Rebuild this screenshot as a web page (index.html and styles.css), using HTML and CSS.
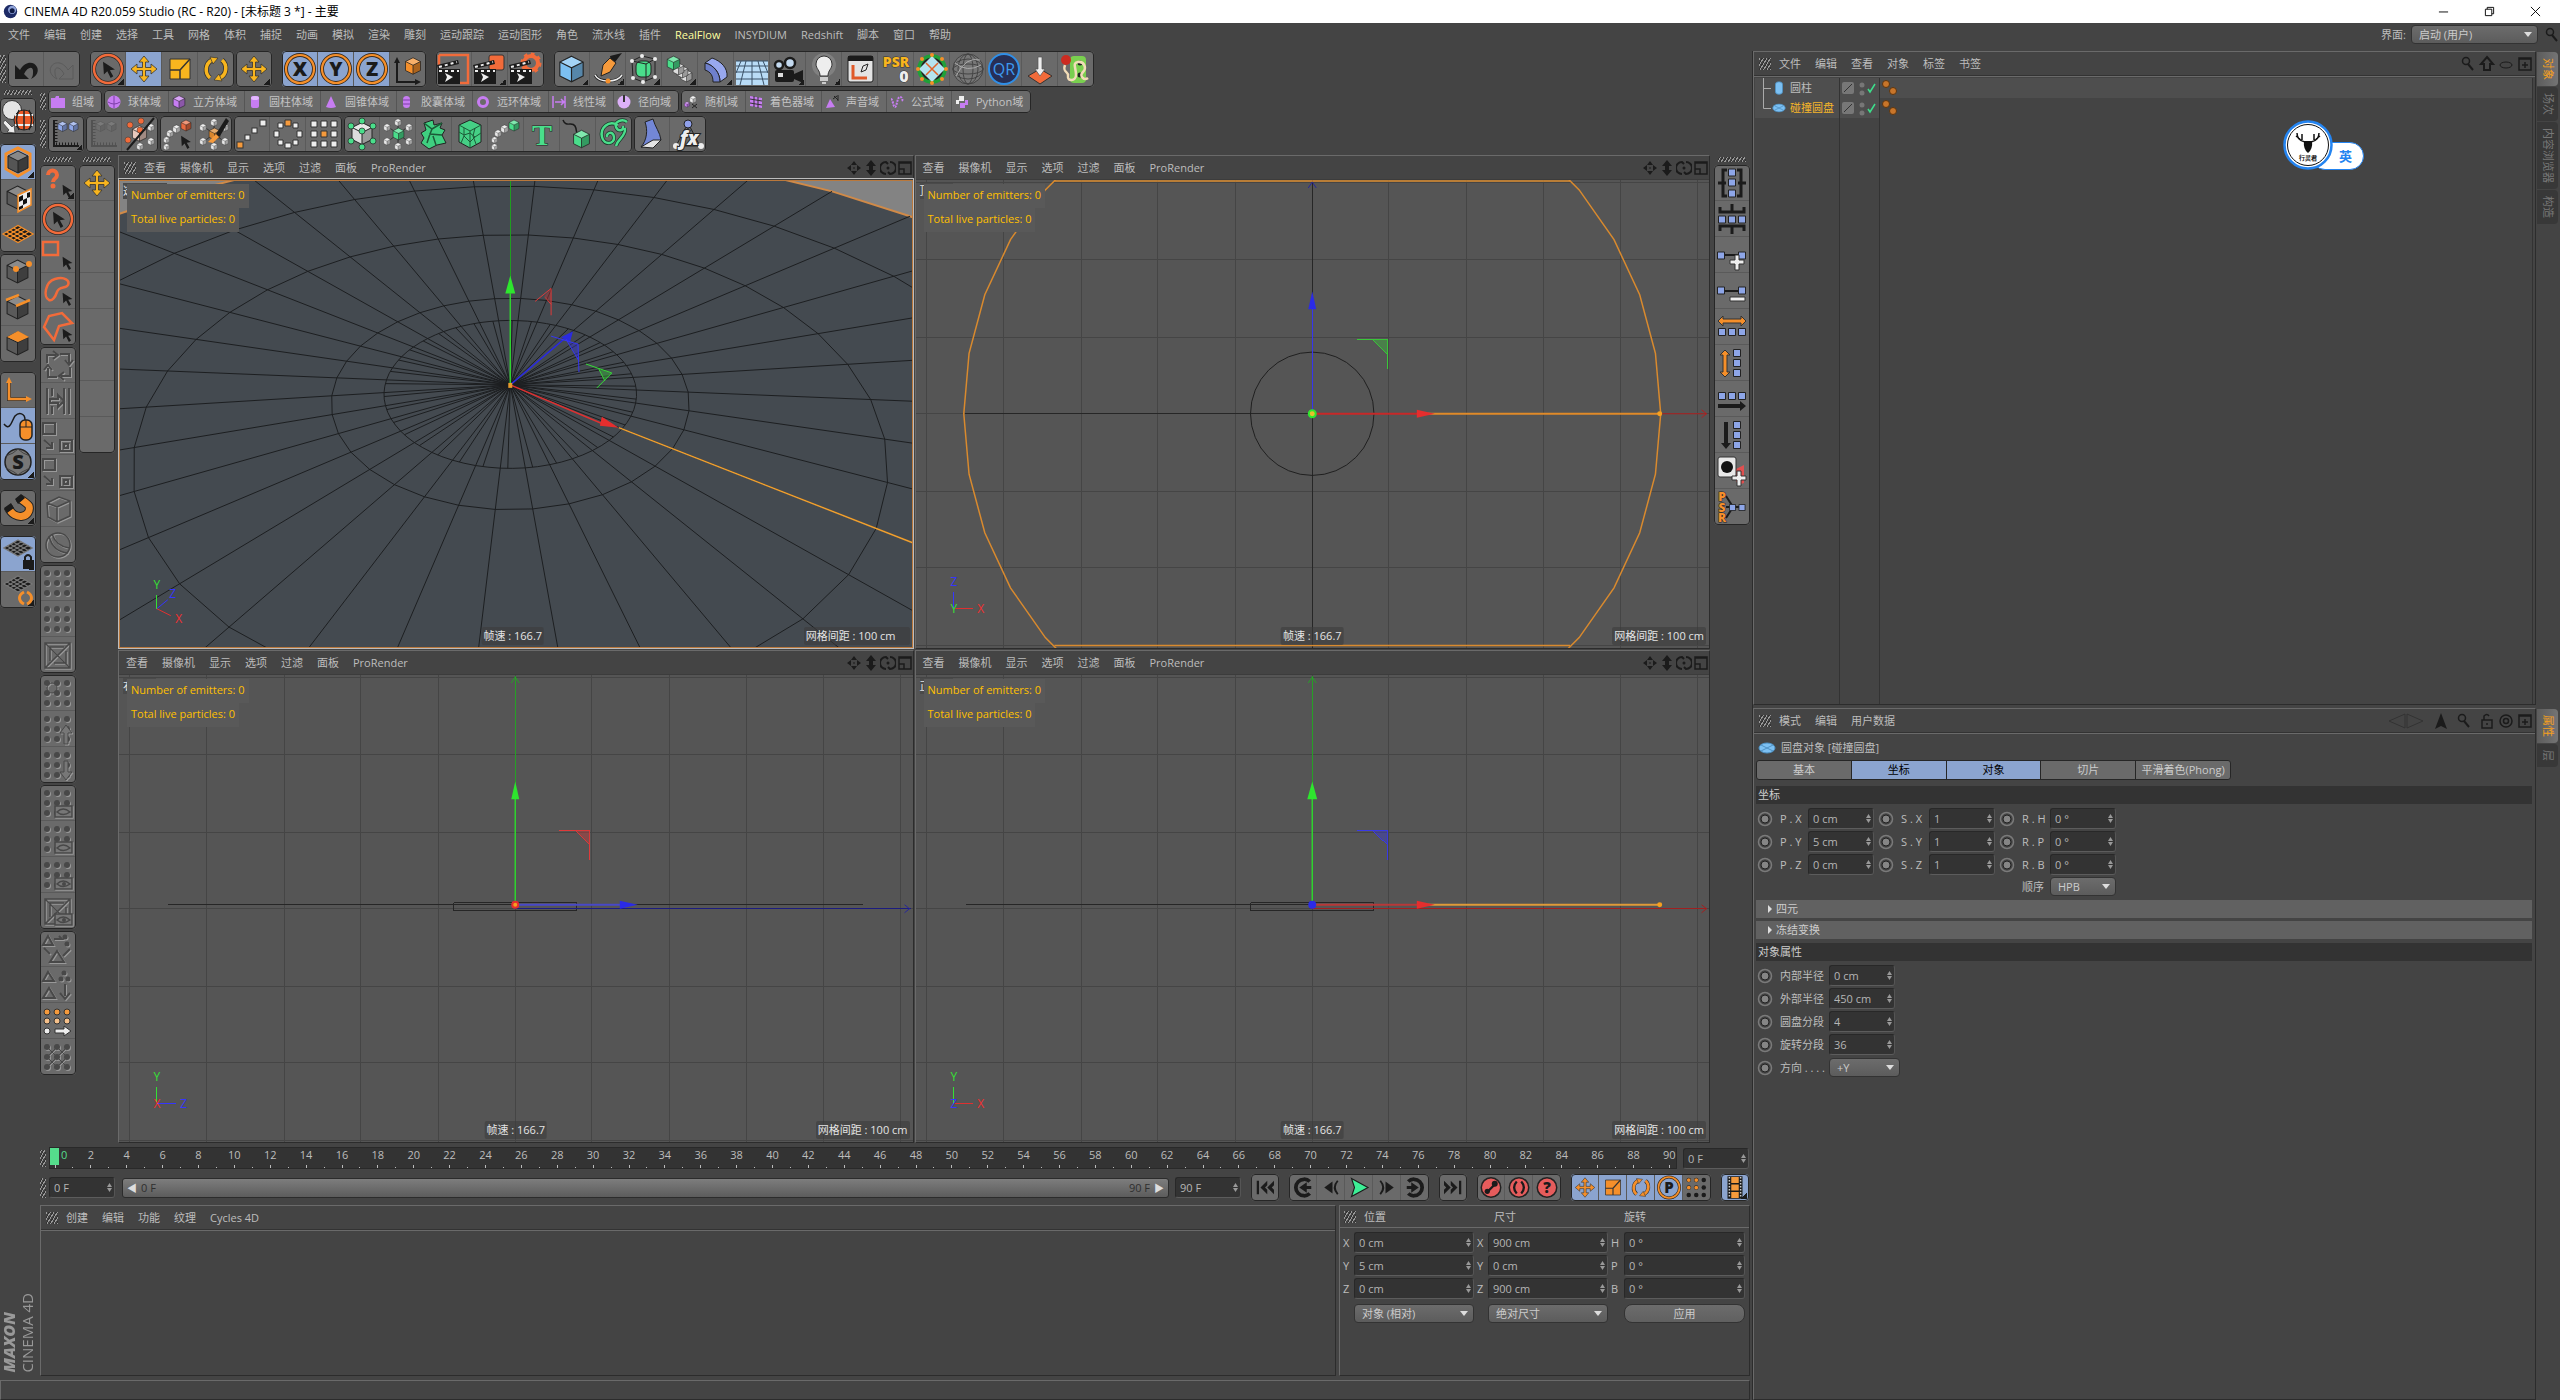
FILE: index.html
```html
<!DOCTYPE html>
<html lang="zh-CN">
<head>
<meta charset="utf-8">
<title>CINEMA 4D R20.059 Studio</title>
<link rel="stylesheet" href="styles.css">
</head>
<body>
<svg class="defs" aria-hidden="true">
<defs>
<symbol id="cube" viewBox="0 0 24 24"><path d="M12 1 22 6v12l-10 5L2 18V6z" fill="currentColor"/><path d="M12 11 22 6v12l-10 5z" fill="#000" opacity=".3"/><path d="M12 11 2 6l10-5 10 5z" fill="#fff" opacity=".3"/><path d="M12 1 22 6v12l-10 5L2 18V6zM2 6l10 5 10-5M12 11v12" fill="none" stroke="#222"/></symbol>
<symbol id="arrow" viewBox="0 0 16 20"><path d="M1 1 15 10 9 11 13 18 10 20 6 12 2 16z" fill="#1b1b1b"/></symbol>
<symbol id="cross" viewBox="0 0 36 36"><path d="M18 5l5 6h-3.500v5.500H25V13l6 5-6 5v-3.500h-5.500V25H23l-5 6-5-6h3.500v-5.500H11V23l-6-5 6-5v3.500h5.500V11H13z" fill="currentColor" stroke="#333" stroke-width=".8"/></symbol>
<symbol id="undo" viewBox="0 0 36 36"><path d="M7 14v14h14l-5-5c4-8 10-8 9-1 0 3-1 4-2 6 6-3 8-8 6-12-3-6-12-6-17 3z" fill="currentColor"/></symbol>
<symbol id="redo" viewBox="0 0 36 36"><path d="M29 14v14H15l5-5c-4-8-10-8-9-1 0 3 1 4 2 6-6-3-8-8-6-12 3-6 12-6 17 3z" fill="none" stroke="#5b5b5b"/></symbol>
<symbol id="sel" viewBox="0 0 36 36"><circle cx="18" cy="18" r="14" fill="none" stroke="#2b2b2b" stroke-width="4"/><circle cx="18" cy="18" r="14" fill="none" stroke="#f26b3a" stroke-width="2.500"/><use href="#arrow" x="12" y="10" width="14" height="17"/></symbol>
<symbol id="scale" viewBox="0 0 36 36"><path d="M8 8h20v20H8z" fill="currentColor" stroke="#333"/><path d="M8 19h10v9M18 19l10-11" fill="none" stroke="#333" stroke-width="1.500"/></symbol>
<symbol id="rot" viewBox="0 0 36 36"><g fill="none" stroke="#333" stroke-width="5"><path d="M12 27a11 11 0 0 1 2-18M24 9a11 11 0 0 1-2 18"/></g><g fill="none" stroke="currentColor" stroke-width="3.500"><path d="M12 27a11 11 0 0 1 2-18M24 9a11 11 0 0 1-2 18"/></g><path d="M12 6l8 1-5 6zM24 30l-8-1 5-6z" fill="currentColor" stroke="#333" stroke-width=".7"/></symbol>
<symbol id="ring" viewBox="0 0 36 36"><circle cx="18" cy="18" r="14" fill="none" stroke="#3a2b1b" stroke-width="4"/><circle cx="18" cy="18" r="14" fill="none" stroke="#f58f2a" stroke-width="2.200"/></symbol>
<symbol id="coord" viewBox="0 0 36 36"><path d="M7 10v21h20" fill="none" stroke="#1b1b1b" stroke-width="2"/><path d="M7 6l3 6H4zM31 31l-6-3v6z" fill="#1b1b1b"/><use href="#cube" x="14" y="4" width="18" height="22" color="#f58f2a"/></symbol>
<symbol id="clap" viewBox="0 0 36 36"><path d="M2 18h22v15H2z" fill="#1b1b1b"/><path d="M1 14 22 9l1 4-21 5z" fill="#1b1b1b"/><path d="M3 16l18-5M3 20h20" stroke="#eee" stroke-width="2" stroke-dasharray="3 3"/><path d="M9 22l8 4-8 5 2-5z" fill="#eee"/></symbol>
<symbol id="rend1" viewBox="0 0 36 36"><path d="M3 4h29v28H24" fill="none" stroke="#f26b3a" stroke-width="2.500"/><path d="M3 14V4" stroke="#f26b3a" stroke-width="2.500"/><use href="#clap"/></symbol>
<symbol id="rend2" viewBox="0 0 36 36"><rect x="17" y="4" width="15" height="15" rx="2" fill="#f26b3a" stroke="#333"/><use href="#clap"/></symbol>
<symbol id="rend3" viewBox="0 0 36 36"><circle cx="23" cy="12" r="7" fill="none" stroke="#f26b3a" stroke-width="4"/><circle cx="23" cy="12" r="9" fill="none" stroke="#f26b3a" stroke-width="3" stroke-dasharray="3.500 3.500"/><use href="#clap"/></symbol>
<symbol id="pcube" viewBox="0 0 36 36"><use href="#cube" x="3" y="4" width="29" height="28" color="#7cc0f2"/></symbol>
<symbol id="pen" viewBox="0 0 36 36"><path d="M20 5 32 2 22 15z" fill="#1b1b1b"/><path d="M20 7l6 5-6 9-9 4 2-11z" fill="#f59a3c" stroke="#222"/><path d="M5 24c4 8 22 8 27 0" fill="none" stroke="#222" stroke-width="3"/><path d="M5 24c4 8 22 8 27 0" fill="none" stroke="#eee" stroke-width="1.500"/><circle cx="18" cy="30" r="2.500" fill="#f58f2a"/></symbol>
<symbol id="subd" viewBox="0 0 36 36"><rect x="10" y="10" width="15" height="16" rx="5" fill="#4ade8b" stroke="#222"/><path d="M6 10l10-5 13 3v18l-12 5-10-4zM6 10l14 3 9-5M20 13v17" fill="none" stroke="#222"/><g fill="#eee"><circle cx="6" cy="10" r="2"/><circle cx="29" cy="8" r="2"/><circle cx="16" cy="5" r="2"/><circle cx="29" cy="26" r="2"/><circle cx="7" cy="27" r="2"/><circle cx="17" cy="31" r="2"/></g></symbol>
<symbol id="arr" viewBox="0 0 36 36"><g color="#ddd"><use href="#cube" x="18" y="18" width="13" height="14"/><use href="#cube" x="14" y="14" width="13" height="14"/><use href="#cube" x="10" y="11" width="13" height="14"/></g><use href="#cube" x="4" y="4" width="15" height="16" color="#4ade8b"/></symbol>
<symbol id="bend" viewBox="0 0 36 36"><path d="M7 12l7-5c9 3 16 10 15 19l-7 5C22 22 16 14 7 12z" fill="#98a8ee" stroke="#222"/><path d="M7 12v7c6 2 8 6 8 12h7C22 22 16 14 7 12z" fill="#6f80cc" stroke="#222"/></symbol>
<symbol id="floor" viewBox="0 0 36 36"><path d="M2 10h32v24H2z" fill="#b9dcf7"/><path d="M2 10h32M2 15h32M2 21h32M2 28h32M18 10v24M12 10 6 34M24 10l6 24M7 10l-5 12M29 10l5 12" stroke="#3a5066" fill="none"/></symbol>
<symbol id="cam" viewBox="0 0 36 36"><rect x="5" y="19" width="19" height="12" rx="2" fill="#1b1b1b"/><path d="M24 23l9-4v13l-9-4z" fill="#1b1b1b"/><circle cx="9" cy="14" r="4" fill="#c4daf0" stroke="#1b1b1b" stroke-width="2.500"/><circle cx="20" cy="12" r="5" fill="#c4daf0" stroke="#1b1b1b" stroke-width="2.500"/><rect x="8" y="22" width="5" height="4" fill="#ddd"/></symbol>
<symbol id="bulb" viewBox="0 0 36 36"><circle cx="18" cy="14" r="12" fill="#fff" opacity=".15"/><path d="M18 5a8 8 0 0 1 8 8c0 5-4 6-4 12h-8c0-6-4-7-4-12a8 8 0 0 1 8-8z" fill="#eee" stroke="#333"/><path d="M14 27h8M14 29h8M16 32h4" stroke="#ccc" stroke-width="2"/></symbol>
<symbol id="plan" viewBox="0 0 36 36"><rect x="6" y="5" width="25" height="26" rx="2" fill="#e4e4e4" stroke="#222"/><path d="M6 5h25v5H6z" fill="#1b1b1b"/><path d="M11 14v13h14" stroke="#e05a2a" stroke-width="3" fill="none"/><path d="M19 21l2-6 5-2-2 6z" fill="none" stroke="#222"/></symbol>
<symbol id="disk" viewBox="0 0 36 36"><circle cx="18" cy="18" r="13" fill="#222" stroke="#1fa038" stroke-width="3.500"/><path d="M18 5 31 18 18 31 5 18z" fill="#b5e4f0"/><path d="M12 12l12 12M24 12 12 24" stroke="#e0642a" stroke-width="1.500"/><g fill="#f58f2a"><circle cx="18" cy="4" r="2"/><circle cx="32" cy="18" r="2"/><circle cx="18" cy="32" r="2"/><circle cx="4" cy="18" r="2"/><circle cx="8" cy="8" r="2"/><circle cx="28" cy="8" r="2"/><circle cx="8" cy="28" r="2"/><circle cx="28" cy="28" r="2"/></g></symbol>
<symbol id="wire" viewBox="0 0 36 36"><circle cx="18" cy="18" r="15" fill="#777" stroke="#444"/><g fill="none" stroke="#444"><ellipse cx="18" cy="18" rx="5" ry="15"/><ellipse cx="18" cy="18" rx="10" ry="15"/><ellipse cx="18" cy="18" rx="15" ry="5"/><ellipse cx="18" cy="18" rx="15" ry="10"/></g><path d="M5 12q12 10 26 2M6 25q10-20 24-16" fill="none" stroke="#aaa"/></symbol>
<symbol id="drop" viewBox="0 0 36 36"><path d="M18 18 30 25 18 33 6 25z" fill="#f26b3a" stroke="#333"/><path d="M16 6h4v12h3l-5 7-5-7h3z" fill="#eee" stroke="#555" stroke-width=".7"/></symbol>
<symbol id="jelly" viewBox="0 0 36 36"><rect x="12" y="5" width="16" height="27" rx="4" fill="#79cf4f"/><circle cx="22" cy="12" r="2.500" fill="#222"/><circle cx="22" cy="24" r="2.500" fill="#222"/><path d="M7 14c-3 8 4 6 3 11-1 6 8 5 8-1 0-8-4-12 2-13s9 6 5 10 1 9 5 6" fill="none" stroke="#f2ddb8" stroke-width="2.500"/><circle cx="8" cy="9" r="5" fill="#cc2b20"/></symbol>
<symbol id="ax2" viewBox="0 0 36 36"><path d="M6 4v26h25" fill="none" stroke="#1b1b1b" stroke-width="2"/><path d="M8 4v24M8 28h24" stroke="#1b1b1b" stroke-width="3" stroke-dasharray="1 2"/><use href="#cube" x="9" y="4" width="11" height="13"/><use href="#cube" x="20" y="4" width="11" height="13"/></symbol>
<symbol id="mol" viewBox="0 0 36 36"><path d="M18 4v28M7 10l22 16M29 10 7 26" stroke="#333" stroke-width="1"/><g color="#e8e8e8"><use href="#cube" x="14" y="2" width="8" height="9"/><use href="#cube" x="3" y="7" width="8" height="9"/><use href="#cube" x="25" y="7" width="8" height="9"/><use href="#cube" x="3" y="21" width="8" height="9"/><use href="#cube" x="25" y="21" width="8" height="9"/><use href="#cube" x="14" y="26" width="8" height="9"/></g><use href="#cube" x="12" y="11" width="13" height="14"/></symbol>
<symbol id="molx" viewBox="0 0 36 36"><g color="#e8e8e8"><use href="#cube" x="25" y="7" width="8" height="9"/><use href="#cube" x="25" y="21" width="8" height="9"/><use href="#cube" x="14" y="26" width="8" height="9"/></g><use href="#cube" x="9" y="9" width="17" height="17" color="#e8c8bc"/><g fill="#f26b3a" stroke="#333" stroke-width=".5"><circle cx="8" cy="9" r="3"/><circle cx="19" cy="5" r="3"/><circle cx="6" cy="24" r="3"/><circle cx="18" cy="14" r="3"/></g><path d="M32 2 5 34" stroke="#1b1b1b" stroke-width="2"/></symbol>
<symbol id="curve" viewBox="0 0 36 36"><g color="#e8e8e8"><use href="#cube" x="3" y="27" width="7" height="8"/><use href="#cube" x="3" y="20" width="7" height="8"/><use href="#cube" x="6" y="13" width="8" height="9"/><use href="#cube" x="12" y="8" width="9" height="10"/></g><use href="#cube" x="20" y="3" width="12" height="13"/></symbol>
<symbol id="brush" viewBox="0 0 36 36"><use href="#mol" color="#d9862e"/><path d="M20 18 30 2l3 3-9 15-7 4z" fill="#1b1b1b"/><path d="M12 26l8-8 3 3-6 6z" fill="#f59a3c"/></symbol>
<symbol id="diag" viewBox="0 0 36 36"><g fill="#eee" stroke="#333"><rect x="11" y="19" width="5" height="5"/><rect x="18" y="12" width="5" height="5"/><rect x="26" y="4" width="6" height="6"/></g><rect x="3" y="26" width="6" height="6" fill="#f59a3c" stroke="#333"/></symbol>
<symbol id="circ" viewBox="0 0 36 36"><g fill="#eee" stroke="#333"><path d="M23 7h5v5h-5zM27 15h5v6h-5zM23 24h5v5h-5zM15 27h6v5h-6zM8 24h5v5H8zM4 15h5v6H4zM8 7h5v5H8z"/><path d="M15 4h6v6h-6z" fill="#f59a3c"/></g></symbol>
<symbol id="grid9" viewBox="0 0 36 36"><g fill="#eee" stroke="#333"><path d="M5 5h6v6H5zM15 5h6v6h-6zM25 5h6v6h-6zM5 15h6v6H5zM25 15h6v6h-6zM5 25h6v6H5zM15 25h6v6h-6zM25 25h6v6h-6z"/><path d="M15 15h6v6h-6z" fill="#f59a3c"/></g></symbol>
<symbol id="gdots" viewBox="0 0 36 36"><use href="#cube" x="6" y="5" width="24" height="25" color="#ddd"/><g fill="#4ade8b" stroke="#222" stroke-width=".7"><circle cx="18" cy="5" r="3"/><circle cx="7" cy="10" r="3"/><circle cx="29" cy="10" r="3"/><circle cx="18" cy="15" r="3"/><circle cx="7" cy="25" r="3"/><circle cx="29" cy="25" r="3"/><circle cx="18" cy="31" r="3"/></g></symbol>
<symbol id="frac" viewBox="0 0 36 36"><path d="M8 7l9-3 1 5 8-2-2 5 5 2-3 5 4 8-9 2-8 4-8-6 3-5-3-5 5-3z" fill="#3fcf80" stroke="#222"/><path d="M8 7l8 6 10-6M16 13l-2 5 12 1M14 18l-3 9M17 20l3 9" stroke="#1c5a37" stroke-width="1.500" fill="none"/></symbol>
<symbol id="voro" viewBox="0 0 36 36"><path d="M18 4 29 9v17l-11 6L7 26V9z" fill="#45cf85" stroke="#222"/><path d="M7 9l11 6 11-6M18 15v17M7 16l5 3 6-2 5 4 6-4M12 12v8l-3 7M23 12l-2 8 3 8M12 20l6 6 5-5" fill="none" stroke="#1c5a37"/></symbol>
<symbol id="line" viewBox="0 0 36 36"><path d="M3 4c3 8 9 1 12 6s-1 10 7 8" fill="none" stroke="#1b1b1b" stroke-width="1.500"/><use href="#cube" x="12" y="13" width="19" height="20" color="#4ade8b"/></symbol>
<symbol id="swirl" viewBox="0 0 36 36"><g id="sw" fill="none" stroke="#1b3b2b" stroke-width="4"><path d="M31 6C26 2 18 6 20 11s8 4 7-1M22 9C12 4 4 12 6 21s13 7 12 0-8-4-7 0M29 12c1 9-7 10-9 18"/></g><path d="M31 6C26 2 18 6 20 11s8 4 7-1M22 9C12 4 4 12 6 21s13 7 12 0-8-4-7 0M29 12c1 9-7 10-9 18" fill="none" stroke="#4ade8b" stroke-width="2.500"/></symbol>
<symbol id="twist" viewBox="0 0 36 36"><path d="M11 6l8-3c2 8 7 13 8 21l-8 5-12 2c6-7 7-17 4-25z" fill="#7387d6" stroke="#222"/><path d="M27 24l-8 8-12-1 12-7z" fill="#e4e4e4" stroke="#222"/></symbol>
<symbol id="fx" viewBox="0 0 36 36"><path d="M18 9v8M17 9 6 30h24L19 9" fill="none" stroke="#222"/><circle cx="18" cy="8" r="4" fill="#8fa0ea" stroke="#222"/><circle cx="6" cy="30" r="3" fill="#eee"/><circle cx="31" cy="30" r="3" fill="#eee"/></symbol>
<symbol id="globe" viewBox="0 0 36 36"><circle cx="12" cy="12" r="9.500" fill="#e4e4e4" stroke="#333"/><circle cx="24" cy="22" r="10" fill="#eb5a28" stroke="#222"/><path d="M15 17h18M15 27h18" stroke="#eee" stroke-width="2"/><path d="M19 12q-5 10 0 20M24 12v20M29 12q5 10 0 20" fill="none" stroke="#222" stroke-width="1.500"/><path d="M5 22l7 7 2-2 1 8-8-1 2-2-6-7z" fill="#eee" stroke="#333" stroke-width=".7"/></symbol>
<symbol id="gcube" viewBox="0 0 36 36"><use href="#cube" x="5" y="4" width="25" height="27" color="#5a5a5a"/></symbol>
<symbol id="mcube" viewBox="0 0 36 36"><path d="M18 4 30 10v15l-12 7-12-7V10z" fill="none" stroke="#f58f2a" stroke-width="3"/><use href="#cube" x="6" y="5" width="24" height="26" color="#555"/></symbol>
<symbol id="tcube" viewBox="0 0 36 36"><use href="#gcube"/><path d="M18 15 31 9v16l-13 7z" fill="#eee" stroke="#f58f2a" stroke-width="1.500"/><path d="M19 17l4-2v5l-4 2zM27 13l3-1v5l-3 1zM23 20l4-2v5l-4 2zM19 27l4-2v3l-4 2z" fill="#111"/></symbol>
<symbol id="mesh" viewBox="0 0 36 24"><path d="M2 12 18 3l16 9-16 9z" fill="#1b1b1b"/><path d="M6 14 22 5M10 16 26 7M14 18 30 9M6 10l16 9M10 8l16 9M14 6l16 9M2 12 18 3l16 9-16 9z" fill="none" stroke="currentColor" stroke-width="1.300"/></symbol>
<symbol id="omesh" viewBox="0 0 36 36"><use href="#mesh" x="1" y="5" width="34" height="26" color="#f58f2a"/></symbol>
<symbol id="vcube" viewBox="0 0 36 36"><use href="#gcube"/><circle cx="16" cy="15" r="3" fill="#f58f2a"/><circle cx="29" cy="10" r="3" fill="#f58f2a"/></symbol>
<symbol id="ecube" viewBox="0 0 36 36"><use href="#gcube"/><path d="M6 10 19 5M16 16l14-6" stroke="#f58f2a" stroke-width="2.500"/></symbol>
<symbol id="fcube" viewBox="0 0 36 36"><use href="#gcube"/><path d="M7 11 18 5l11 6-11 5z" fill="#f58f2a"/></symbol>
<symbol id="axes" viewBox="0 0 36 36"><path d="M9 9v18h18" fill="none" stroke="#333" stroke-width="4"/><path d="M9 9v18h18" fill="none" stroke="#f58f2a" stroke-width="2.500"/><path d="M9 5l3 6H6zM32 27l-6-3v6z" fill="#f58f2a"/></symbol>
<symbol id="mouse" viewBox="0 0 36 36"><path d="M4 16c6 8 8-4 11-8 4-4 10-3 10 4" fill="none" stroke="#1b1b1b" stroke-width="1.500"/><rect x="20" y="12" width="12" height="20" rx="5" fill="#f58f2a" stroke="#222" stroke-width="1.500"/><path d="M20 19h12M26 12v7" stroke="#222"/></symbol>
<symbol id="snap" viewBox="0 0 36 36"><circle cx="18" cy="18" r="13" fill="#777" stroke="#222" stroke-width="1.500"/><path d="M6 12l7-3 5-4 5 4 7 3M6 24l8 4 4 3 4-3 8-4" fill="none" stroke="#444"/></symbol>
<symbol id="magnet" viewBox="0 0 36 36"><path d="M8 17c7 15 24 10 21-1-2-3-6-5-10-8" fill="none" stroke="#222" stroke-width="9"/><path d="M8 17c7 15 24 10 21-1-2-3-6-5-10-8" fill="none" stroke="#f58f2a" stroke-width="7"/><path d="M4 18l7-5 3 5-7 5zM15 9l6-5 4 4-7 6z" fill="#1b1b1b"/></symbol>
<symbol id="lock" viewBox="0 0 36 36"><use href="#mesh" x="2" y="1" width="32" height="22" color="#777"/><rect x="23" y="24" width="11" height="9" fill="#1b1b1b"/><path d="M25 24v-3q3-4 6 0v3" fill="none" stroke="#1b1b1b" stroke-width="2"/></symbol>
<symbol id="mbr" viewBox="0 0 36 36"><use href="#mesh" x="2" y="1" width="32" height="22" color="#777"/><path d="M24 20c-6 3-6 9 0 12M27 20c6 3 6 9 0 12" fill="none" stroke="#f58f2a" stroke-width="3"/></symbol>
<symbol id="qm" viewBox="0 0 36 36"><path d="M8 10c0-6 9-6 9 0 0 4-4 3-4 7" fill="none" stroke="#f26b3a" stroke-width="4"/><circle cx="13" cy="21" r="2.500" fill="#f26b3a"/><use href="#arrow" x="21" y="19" width="13" height="14"/></symbol>
<symbol id="srect" viewBox="0 0 36 36"><path d="M3 5h15v13H3z" fill="none" stroke="#f26b3a" stroke-width="2.500"/><use href="#arrow" x="21" y="19" width="13" height="14"/></symbol>
<symbol id="lasso" viewBox="0 0 36 36"><path d="M9 27C3 24 5 9 15 6s15 2 13 6-9 1-11 7-5 9-8 8z" fill="none" stroke="#f26b3a" stroke-width="2.500"/><use href="#arrow" x="21" y="19" width="13" height="14"/></symbol>
<symbol id="spoly" viewBox="0 0 36 36"><path d="M14 31 4 18 9 7l13-3 10 10-13 3z" fill="none" stroke="#f26b3a" stroke-width="2.500"/><use href="#arrow" x="21" y="19" width="13" height="14"/></symbol>
<symbol id="d1" viewBox="0 0 36 36"><path d="M7 16V8h9M13 4l5 4-5 4M20 7h9v9M25 13l4 5 4-5M30 20v9h-9M24 25l-5 4 5 4M17 30H8v-9M4 23l4-5 4 5" fill="none" stroke="currentColor" stroke-width="2"/></symbol>
<symbol id="d2" viewBox="0 0 36 36"><path d="M7 5v26M12 5v8M12 23v8M24 5v26M29 5v26M10 16h8v-4l6 6-6 6v-4h-8z" fill="none" stroke="currentColor" stroke-width="2"/></symbol>
<symbol id="d3" viewBox="0 0 36 36"><path d="M3 4h12v11H3zM20 21h12v11H20zM24 25h4v4h-4zM4 21l8 7M12 23v6H6" fill="none" stroke="currentColor" stroke-width="2"/></symbol>
<symbol id="d4" viewBox="0 0 36 36"><path d="M7 12l12-6 11 4v15l-13 6-9-5zM7 12l10 4 13-6M17 16v15" fill="none" stroke="currentColor" stroke-width="1.500"/></symbol>
<symbol id="d5" viewBox="0 0 36 36"><circle cx="18" cy="18" r="12" fill="none" stroke="currentColor" stroke-width="1.500"/><path d="M9 9q4 16 19 17M12 7q4 12 17 14" fill="none" stroke="currentColor" stroke-width="1.500"/></symbol>
<symbol id="dots" viewBox="0 0 36 36"><g fill="currentColor"><circle cx="7" cy="8" r="3"/><circle cx="17" cy="8" r="3"/><circle cx="27" cy="8" r="3"/><circle cx="7" cy="18" r="3"/><circle cx="17" cy="18" r="3"/><circle cx="27" cy="18" r="3"/><circle cx="7" cy="28" r="3"/><circle cx="17" cy="28" r="3"/><circle cx="27" cy="28" r="3"/></g></symbol>
<symbol id="d6" viewBox="0 0 36 36"><path d="M5 6h25v25H5zM5 6l25 25M30 6 5 31M10 24V10h14M26 14v12H14" fill="none" stroke="currentColor" stroke-width="1.500"/></symbol>
<symbol id="dup" viewBox="0 0 36 36"><use href="#dots"/><path d="M24 33V22h-4l6-8 6 8h-4v11z" fill="#777" stroke="currentColor"/></symbol>
<symbol id="ddn" viewBox="0 0 36 36"><use href="#dots"/><path d="M24 14h4v11h4l-6 8-6-8h4z" fill="#777" stroke="currentColor"/></symbol>
<symbol id="deye" viewBox="0 0 36 36"><use href="#dots"/><path d="M15 21h17v11H15z" fill="#777" stroke="currentColor" stroke-width="1.500"/><path d="M17 27q6-6 13 0-7 5-13 0z" fill="none" stroke="currentColor" stroke-width="1.500"/></symbol>
<symbol id="deye2" viewBox="0 0 36 36"><use href="#d6"/><path d="M15 21h17v11H15z" fill="#777" stroke="currentColor" stroke-width="1.500"/><path d="M17 27q6-6 13 0-7 5-13 0z" fill="none" stroke="currentColor" stroke-width="1.500"/><circle cx="24" cy="27" r="2" fill="currentColor"/></symbol>
<symbol id="tri" viewBox="0 0 36 36"><path d="M3 14 8 5l5 9zM10 31l7-11 7 11zM14 8h8l-3-3M4 17l6 6M30 18l-7 7" fill="none" stroke="currentColor" stroke-width="2"/><circle cx="27" cy="13" r="2.500" fill="currentColor"/><circle cx="25" cy="6" r="2.500" fill="currentColor"/></symbol>
<symbol id="tri2" viewBox="0 0 36 36"><path d="M3 14 8 5l6 9zM3 31l6-10 6 10zM25 17v12M20 26l5 6 5-6" fill="none" stroke="currentColor" stroke-width="2"/><circle cx="21" cy="12" r="2.500" fill="currentColor"/><circle cx="28" cy="12" r="2.500" fill="currentColor"/><circle cx="24" cy="6" r="2.500" fill="currentColor"/></symbol>
<symbol id="odots" viewBox="0 0 36 36"><g stroke="#333"><g fill="#f59a3c"><circle cx="7" cy="9" r="3"/><circle cx="17" cy="9" r="3"/><circle cx="27" cy="9" r="3"/></g><g fill="#f5c08a"><circle cx="7" cy="18" r="3"/><circle cx="17" cy="18" r="3"/><circle cx="27" cy="18" r="3"/></g><circle cx="7" cy="28" r="3" fill="#eee"/><path d="M15 26h9v-3l7 5-7 5v-3h-9z" fill="#eee"/></g></symbol>
<symbol id="dnet" viewBox="0 0 36 36"><use href="#dots"/><path d="M7 18 17 8l10 10-10 10zM7 8l20 20M27 8 7 28" fill="none" stroke="currentColor"/></symbol>
<symbol id="b" viewBox="0 0 8 8"><path d="M.5.500h7v7h-7z" fill="#8ea6e8" stroke="#222"/></symbol>
<symbol id="r1" viewBox="0 0 36 36"><path d="M13 5H9v26h4M23 5h4v26h-4M4 18h8M24 18h8" fill="none" stroke="#1b1b1b" stroke-width="3"/><use href="#b" x="14" y="3" width="8" height="9"/><use href="#b" x="14" y="13" width="8" height="9"/><use href="#b" x="14" y="24" width="8" height="9"/></symbol>
<symbol id="r2" viewBox="0 0 36 36"><path d="M6 6v5h24V6M18 3v8M6 30v-5h24v5M18 25v8" fill="none" stroke="#1b1b1b" stroke-width="3"/><use href="#b" x="4" y="14" width="8" height="9"/><use href="#b" x="14" y="14" width="8" height="9"/><use href="#b" x="24" y="14" width="8" height="9"/></symbol>
<symbol id="r3" viewBox="0 0 36 36"><path d="M8 18h20" stroke="#1b1b1b" stroke-width="2"/><use href="#b" x="3" y="14" width="8" height="9"/><use href="#b" x="24" y="14" width="8" height="9"/><path d="M21 18h4v5h5v4h-5v6h-4v-6h-5v-4h5z" fill="#eee" stroke="#333"/></symbol>
<symbol id="r4" viewBox="0 0 36 36"><path d="M8 18h20" stroke="#1b1b1b" stroke-width="2"/><use href="#b" x="3" y="13" width="8" height="9"/><use href="#b" x="24" y="13" width="8" height="9"/><path d="M16 24h15v4H16z" fill="#eee" stroke="#333"/></symbol>
<symbol id="r5" viewBox="0 0 36 36"><path d="M4 12l5-5v3h18V7l5 5-5 5v-3H9v3z" fill="#f58f2a" stroke="#333"/><use href="#b" x="4" y="19" width="8" height="8"/><use href="#b" x="14" y="19" width="8" height="8"/><use href="#b" x="24" y="19" width="8" height="8"/></symbol>
<symbol id="r6" viewBox="0 0 36 36"><path d="M11 5l5 5h-3v17h3l-5 5-5-5h3V10H6z" fill="#f58f2a" stroke="#333"/><use href="#b" x="19" y="4" width="8" height="8"/><use href="#b" x="19" y="14" width="8" height="8"/><use href="#b" x="19" y="24" width="8" height="8"/></symbol>
<symbol id="r7" viewBox="0 0 36 36"><path d="M4 23h22v-3l6 5-6 5v-3H4z" fill="#1b1b1b"/><use href="#b" x="4" y="11" width="8" height="8"/><use href="#b" x="14" y="11" width="8" height="8"/><use href="#b" x="24" y="11" width="8" height="8"/></symbol>
<symbol id="r8" viewBox="0 0 36 36"><path d="M10 5h4v21h3l-5 6-5-6h3z" fill="#1b1b1b"/><use href="#b" x="19" y="4" width="8" height="8"/><use href="#b" x="19" y="14" width="8" height="8"/><use href="#b" x="19" y="24" width="8" height="8"/></symbol>
<symbol id="r9" viewBox="0 0 36 36"><path d="M18 18l12-6v18l-6 2z" fill="#e05050"/><rect x="4" y="4" width="18" height="20" rx="2" fill="#e8e8e8" stroke="#333"/><circle cx="13" cy="14" r="6" fill="#111"/><path d="M23 18h4v5h5v4h-5v6h-4v-6h-5v-4h5z" fill="#eee" stroke="#333"/></symbol>
<symbol id="r10" viewBox="0 0 36 36"><path d="M12 7l7 11-7 11M12 18h14" fill="none" stroke="#1b1b1b" stroke-width="2"/><use href="#b" x="15" y="15" width="7" height="7"/><use href="#b" x="24" y="15" width="8" height="7"/></symbol>
<symbol id="t1" viewBox="0 0 36 36"><path d="M7 9h3v18H7zM21 9l-9 9 9 9v-6l-3-3 3-3zM30 9l-9 9 9 9v-6l-3-3 3-3z" fill="#1b1b1b"/></symbol>
<symbol id="t2" viewBox="0 0 36 36"><path d="M27 10a11 11 0 1 0 0 16" fill="none" stroke="#1b1b1b" stroke-width="5"/><path d="M13 18l10-7v5h6v4h-6v5z" fill="#1b1b1b"/></symbol>
<symbol id="t3" viewBox="0 0 36 36"><path d="M20 10v16L9 18z" fill="#1b1b1b"/><path d="M27 9q-8 9 0 18" fill="none" stroke="#1b1b1b" stroke-width="2.500"/></symbol>
<symbol id="t4" viewBox="0 0 36 36"><path d="M8 6 30 18 8 30l4-12z" fill="#3dee96" stroke="#1b1b1b" stroke-width="1.500"/></symbol>
<symbol id="rec" viewBox="0 0 36 36"><circle cx="18" cy="18" r="13" fill="#e65c5c" stroke="#222" stroke-width="2"/></symbol>
<symbol id="reck" viewBox="0 0 36 36"><use href="#rec"/><path d="M13 24 23 14" stroke="#1b1b1b" stroke-width="3"/><circle cx="13" cy="23" r="3.500" fill="#1b1b1b"/><circle cx="23" cy="13" r="4" fill="#1b1b1b"/></symbol>
<symbol id="recp" viewBox="0 0 36 36"><use href="#rec"/><path d="M15 10q-7 8 0 16M21 10q7 8 0 16" fill="none" stroke="#1b1b1b" stroke-width="3"/></symbol>
<symbol id="film" viewBox="0 0 36 36"><path d="M8 3h20v30H8z" fill="#1b1b1b"/><path d="M13 4h10v8H13zM13 14h10v8H13zM13 24h10v8H13z" fill="#f59a3c"/><path d="M10.500 4v28M25.500 4v28" stroke="#ccc" stroke-width="2" stroke-dasharray="2 2"/></symbol>
<symbol id="kdots" viewBox="0 0 36 36"><g color="#1b1b1b"><use href="#dots"/></g><g fill="#f58f2a"><circle cx="7" cy="8" r="2.500"/><circle cx="17" cy="8" r="2.500"/><circle cx="7" cy="18" r="2.500"/><circle cx="17" cy="18" r="2.500"/></g></symbol>
<symbol id="nav1" viewBox="0 0 16 16"><path d="M8 1l3 4H5zM8 15l3-4H5zM1 8l4-3v6zM15 8l-4-3v6zM8 7l1 1-1 1-1-1z" fill="#1b1b1b"/></symbol>
<symbol id="nav2" viewBox="0 0 16 16"><path d="M8 0l5 6h-3v4h3l-5 6-5-6h3V6H3z" fill="#1b1b1b"/></symbol>
<symbol id="nav3" viewBox="0 0 16 16"><path d="M6 14A6 6 0 0 1 6 2l2 2M10 2a6 6 0 0 1 0 12l-2-2" fill="none" stroke="#1b1b1b" stroke-width="2"/><circle cx="8" cy="8" r="1.500" fill="#1b1b1b"/></symbol>
<symbol id="nav4" viewBox="0 0 16 16"><path d="M2 2h12v12H2zM2 3h12M2 9h5v5" fill="none" stroke="#1b1b1b" stroke-width="1.500"/></symbol>
<symbol id="mag" viewBox="0 0 16 16"><circle cx="6" cy="5" r="3.500" fill="none" stroke="#1b1b1b" stroke-width="1.500"/><path d="M8 8l5 6" stroke="#1b1b1b" stroke-width="2"/></symbol>
<symbol id="plus" viewBox="0 0 16 16"><path d="M2 2h12v12H2zM2 3h12M8 6v6M5 9h6" fill="none" stroke="#1b1b1b" stroke-width="1.500"/></symbol>
<symbol id="disc" viewBox="0 0 18 12"><ellipse cx="9" cy="6" rx="8" ry="5" fill="#7cc0f2" stroke="#4f92c4"/><path d="M3 3l12 6M3 9l12-6" stroke="#4f92c4"/></symbol>
<symbol id="tag" viewBox="0 0 16 20"><circle cx="4" cy="6" r="3.500" fill="#c8752a" stroke="#5a3510"/><circle cx="11" cy="13" r="3.500" fill="#c8752a" stroke="#5a3510"/></symbol>
<symbol id="key" viewBox="0 0 16 16"><circle cx="8" cy="8" r="6.500" fill="none" stroke="#7a7a7a" stroke-width="1.500"/><circle cx="8" cy="8" r="4" fill="#858585" stroke="#222" stroke-width="1"/></symbol>
</defs>
</svg>

<header class="title">
  <svg class="app" viewBox="0 0 18 18"><circle cx="9" cy="9" r="8" fill="#1d2b66"/><circle cx="11" cy="7" r="5" fill="#8ea2d8"/><circle cx="11" cy="8" r="3" fill="#0f1a44"/></svg>
  <h1>CINEMA 4D R20.059 Studio (RC - R20) - [未标题 3 *] - 主要</h1>
  <button aria-label="最小化"><svg viewBox="0 0 12 12"><path d="M1 6.500h10" stroke="#000"/></svg></button>
  <button aria-label="还原"><svg viewBox="0 0 12 12"><path d="M1.500 3.500h7v7h-7zM3.500 3.500v-2h7v7h-2" fill="none" stroke="#000"/></svg></button>
  <button aria-label="关闭"><svg viewBox="0 0 12 12"><path d="M1 1l10 10M11 1 1 11" stroke="#000"/></svg></button>
</header>

<nav class="menubar">
  <a href="#">文件</a><a href="#">编辑</a><a href="#">创建</a><a href="#">选择</a><a href="#">工具</a><a href="#">网格</a><a href="#">体积</a><a href="#">捕捉</a><a href="#">动画</a><a href="#">模拟</a><a href="#">渲染</a><a href="#">雕刻</a><a href="#">运动跟踪</a><a href="#">运动图形</a><a href="#">角色</a><a href="#">流水线</a><a href="#">插件</a><a href="#" class="hot">RealFlow</a><a href="#">INSYDIUM</a><a href="#">Redshift</a><a href="#">脚本</a><a href="#">窗口</a><a href="#">帮助</a>
  <label class="layout">界面: <select><option>启动 (用户)</option></select></label>
  <svg class="i16"><use href="#mag"/></svg>
</nav>

<div class="main">
<div class="left">
  <div class="bar first">
    <i class="grip v"></i>
    <div class="g"><button class="c"><svg class="k"><use href="#undo"/></svg></button><button class="c"><svg><use href="#redo"/></svg></button></div>
    <div class="g"><button class="c m"><svg><use href="#sel"/></svg></button><button class="c on"><svg><use href="#cross"/></svg></button><button class="c"><svg><use href="#scale"/></svg></button><button class="c"><svg><use href="#rot"/></svg></button></div>
    <div class="g near"><button class="c m"><svg><use href="#cross"/></svg></button></div>
    <div class="g"><button class="c on"><svg><use href="#ring"/><text x="18" y="25" class="xyz">X</text></svg></button><button class="c on"><svg><use href="#ring"/><text x="18" y="25" class="xyz">Y</text></svg></button><button class="c on"><svg><use href="#ring"/><text x="18" y="25" class="xyz">Z</text></svg></button><button class="c"><svg><use href="#coord"/></svg></button></div>
    <div class="g"><button class="c"><svg><use href="#rend1"/></svg></button><button class="c m"><svg><use href="#rend2"/></svg></button><button class="c"><svg><use href="#rend3"/></svg></button></div>
    <div class="g"><button class="c m"><svg><use href="#pcube"/></svg></button><button class="c m"><svg><use href="#pen"/></svg></button><button class="c m"><svg><use href="#subd"/></svg></button><button class="c m"><svg><use href="#arr"/></svg></button><button class="c m"><svg><use href="#bend"/></svg></button><button class="c m"><svg><use href="#floor"/></svg></button><button class="c m"><svg><use href="#cam"/></svg></button><button class="c m"><svg><use href="#bulb"/></svg></button><button class="c"><svg><use href="#plan"/></svg></button><button class="c"><svg><text x="18" y="16" class="psr">PSR</text><text x="26" y="31" class="zero">0</text></svg></button><button class="c"><svg><use href="#disk"/></svg></button><button class="c"><svg><use href="#wire"/></svg></button><button class="c"><svg><circle cx="18" cy="18" r="15" fill="#272f55" stroke="#2f8fe8" stroke-width="2"/><text x="18" y="24" class="qr">QR</text></svg></button><button class="c"><svg><use href="#drop"/></svg></button><button class="c"><svg><use href="#jelly"/></svg></button></div>
  </div>
  <div class="work">
    <aside class="tools a">
      <i class="grip h"></i>
      <div class="g col"><button class="c"><svg><use href="#globe"/></svg></button></div>
      <div class="g col far"><button class="c on m"><svg><use href="#mcube"/></svg></button><button class="c"><svg><use href="#tcube"/></svg></button><button class="c"><svg><use href="#omesh"/></svg></button></div>
      <div class="g col"><button class="c"><svg><use href="#vcube"/></svg></button><button class="c"><svg><use href="#ecube"/></svg></button><button class="c"><svg><use href="#fcube"/></svg></button></div>
      <div class="g col far"><button class="c"><svg><use href="#axes"/></svg></button><button class="c on"><svg><use href="#mouse"/></svg></button><button class="c on m"><svg><use href="#snap"/><text x="18" y="25" class="xyz">S</text></svg></button></div>
      <div class="g col far"><button class="c m"><svg><use href="#magnet"/></svg></button></div>
      <div class="g col far"><button class="c on m"><svg><use href="#lock"/></svg></button><button class="c m"><svg><use href="#mbr"/></svg></button></div>
      <div class="brand"><b>MAXON</b><span>CINEMA 4D</span></div>
    </aside>
    <div class="center">
      <div class="bar fields">
        <i class="grip v"></i>
        <div class="g"><button class="f"><svg viewBox="0 0 14 14"><path d="M0 3h4l1-2h3v2h6v10H0z" fill="#c77df2"/></svg>组域</button></div>
        <div class="g near"><button class="f"><svg viewBox="0 0 14 14"><circle cx="7" cy="7" r="6.500" fill="#c77df2"/><path d="M1 7q6 4 12 0M7 1v12" stroke="#7d3fa8" fill="none"/></svg>球体域</button><button class="f"><svg viewBox="0 0 14 14" color="#c77df2"><use href="#cube" width="14" height="14"/></svg>立方体域</button><button class="f"><svg viewBox="0 0 14 14"><rect x="3" y="1" width="8" height="12" rx="2" fill="#c77df2"/><ellipse cx="7" cy="3" rx="4" ry="2" fill="#e4b8ff"/></svg>圆柱体域</button><button class="f"><svg viewBox="0 0 14 14"><path d="M7 1l5 11q-5 2-10 0z" fill="#c77df2"/></svg>圆锥体域</button><button class="f"><svg viewBox="0 0 14 14"><rect x="3" y="1" width="7" height="12" rx="3.500" fill="#c77df2"/><path d="M3 5h7M3 9h7" stroke="#7d3fa8"/></svg>胶囊体域</button><button class="f"><svg viewBox="0 0 14 14"><circle cx="7" cy="7" r="4.500" fill="none" stroke="#c77df2" stroke-width="3"/></svg>远环体域</button><button class="f"><svg viewBox="0 0 14 14"><path d="M1 1v12M13 1v12M3 7h8M9 4l3 3-3 3" fill="none" stroke="#c77df2" stroke-width="1.500"/></svg>线性域</button><button class="f"><svg viewBox="0 0 14 14"><circle cx="7" cy="7" r="6.500" fill="#dcb0f8"/><path d="M7 0v7" stroke="#333" stroke-width="2"/></svg>径向域</button></div>
        <div class="g near"><button class="f"><svg viewBox="0 0 14 14" color="#eee"><use href="#cube" x="5" width="8" height="9"/><use href="#cube" y="6" width="6" height="7" color="#c77df2"/><path d="M8 9l5 4M13 9l-5 4" stroke="#222"/></svg>随机域</button><button class="f"><svg viewBox="0 0 14 14"><path d="M1 1l12 2v10L1 11z" fill="#c77df2"/><path d="M1 4l12 2M1 8l12 2M5 1v11M9 2v11" stroke="#333"/></svg>着色器域</button><button class="f"><svg viewBox="0 0 14 14"><path d="M5 4l5 8-9 1z" fill="#c77df2"/><path d="M8 4l4-3M9 1l4 4M13 0v6" stroke="#222"/></svg>声音域</button><button class="f"><svg viewBox="0 0 14 14"><path d="M1 4c2 0 2 8 4 8s2-10 5-10 2 4 3 4" fill="none" stroke="#c77df2" stroke-width="2" stroke-dasharray="2 1"/></svg>公式域</button><button class="f"><svg viewBox="0 0 14 14"><path d="M4 1h5v5H4v3H1V5h3z" fill="#eee"/><path d="M10 13H5V8h5V5h3v5h-3z" fill="#c77df2"/></svg>Python域</button></div>
      </div>
      <div class="bar mograph">
        <i class="grip v"></i>
        <div class="g"><button class="c m"><svg class="blue"><use href="#ax2"/></svg></button></div>
        <div class="g near"><button class="c"><svg class="ghost"><use href="#ax2"/></svg></button><button class="c"><svg><use href="#molx"/></svg></button></div>
        <div class="g near"><button class="c"><svg class="red"><use href="#curve"/><use href="#arrow" x="19" y="19" width="14" height="14"/></svg></button><button class="c"><svg><use href="#brush"/></svg></button></div>
        <div class="g near"><button class="c"><svg><use href="#diag"/></svg></button><button class="c"><svg><use href="#circ"/></svg></button><button class="c"><svg><use href="#grid9"/></svg></button></div>
        <div class="g near"><button class="c"><svg><use href="#gdots"/></svg></button><button class="c"><svg class="green"><use href="#mol"/></svg></button><button class="c"><svg><use href="#frac"/></svg></button><button class="c"><svg><use href="#voro"/></svg></button><button class="c"><svg class="green"><use href="#curve"/></svg></button><button class="c"><svg><text x="18" y="29" class="tee">T</text></svg></button><button class="c"><svg><use href="#line"/></svg></button><button class="c"><svg><use href="#swirl"/></svg></button></div>
        <div class="g near"><button class="c"><svg><use href="#twist"/></svg></button><button class="c"><svg><use href="#fx"/><text x="19" y="29" class="efx">fx</text></svg></button></div>
      </div>
      <div class="stage">
        <aside class="tools">
          <i class="grip h"></i>
          <div class="g col"><button class="c m"><svg><use href="#qm"/></svg></button><button class="c"><svg><use href="#sel"/></svg></button><button class="c"><svg><use href="#srect"/></svg></button><button class="c"><svg><use href="#lasso"/></svg></button><button class="c"><svg><use href="#spoly"/></svg></button></div>
          <div class="g col dim"><button class="c"><svg><use href="#d1"/></svg></button><button class="c"><svg><use href="#d2"/></svg></button><button class="c"><svg><use href="#d3"/></svg></button><button class="c"><svg><use href="#d3"/></svg></button><button class="c"><svg><use href="#d4"/></svg></button><button class="c"><svg><use href="#d5"/></svg></button></div>
          <div class="g col dim"><button class="c"><svg><use href="#dots"/></svg></button><button class="c"><svg><use href="#dots"/></svg></button><button class="c"><svg><use href="#d6"/></svg></button></div>
          <div class="g col dim"><button class="c"><svg><use href="#dots"/><circle cx="12" cy="13" r="5" fill="none" stroke="currentColor"/></svg></button><button class="c"><svg><use href="#dup"/></svg></button><button class="c"><svg><use href="#ddn"/></svg></button></div>
          <div class="g col dim"><button class="c"><svg><use href="#deye"/></svg></button><button class="c"><svg><use href="#deye"/></svg></button><button class="c"><svg><use href="#deye"/><circle cx="24" cy="27" r="2" fill="currentColor"/></svg></button><button class="c"><svg><use href="#deye2"/></svg></button></div>
          <div class="g col"><button class="c dim"><svg><use href="#tri"/></svg></button><button class="c dim"><svg><use href="#tri2"/></svg></button><button class="c"><svg><use href="#odots"/></svg></button><button class="c dim"><svg><use href="#dnet"/></svg></button></div>
        </aside>
        <aside class="tools">
          <i class="grip h"></i>
          <div class="g col"><button class="c"><svg><use href="#cross"/></svg></button><button class="c"></button><button class="c"></button><button class="c"></button><button class="c"></button><button class="c"></button><button class="c"></button><button class="c"></button></div>
        </aside>

        <div class="views">
          <section class="view active">
            <header><i class="grip sq"></i><a href="#">查看</a><a href="#">摄像机</a><a href="#">显示</a><a href="#">选项</a><a href="#">过滤</a><a href="#">面板</a><a href="#">ProRender</a><span class="nav"><svg><use href="#nav1"/></svg><svg><use href="#nav2"/></svg><svg><use href="#nav3"/></svg><svg><use href="#nav4"/></svg></span></header>
            <div class="canvas persp">
              <svg viewBox="0 0 797 470" preserveAspectRatio="none">
                <g id="mesh3d"></g>
                <path class="px" d="M393 206V0" stroke="#1f9f1f"/><path d="M393 206v-92" stroke="#2fd32f" stroke-width="1.500"/><path d="M393 96l5 18h-10z" fill="#2ee62e"/>
                <path d="M393 206l55-47" stroke="#2b2be0" stroke-width="1.500"/><path d="M456 152l-3 11-9-5z" fill="#2b2be0"/><path d="M434 157l27 8 1 28M449 160l13 22" fill="none" stroke="#3535f6"/><path d="M451 162l11 3v17z" fill="#3535e6" opacity=".4"/>
                <path d="M393 206l95 40" stroke="#e03030" stroke-width="1.500"/><path d="M485 238l17 11-19-2z" fill="#e62e2e"/>
                <path d="M418 122l16-13v27M428 118l6 7" fill="none" stroke="#e03a3a"/><path d="M427 117l7-8v15z" fill="#c83a3a" opacity=".4"/>
                <path d="M469 185l26 9-15 15M482 190l6 12" fill="none" stroke="#35e035"/><path d="M482 190l13 4-7 7z" fill="#35c035" opacity=".4"/>
                <rect x="391" y="204" width="4" height="5" fill="#e69a2c"/>
                <path class="px" d="M38 431v-14" stroke="#35e035"/><path d="M38 431l11-9" stroke="#3535ff"/><path d="M38 431l14 7" stroke="#e03030"/>
                <g class="gz"><text x="38" y="411" fill="#35e035">Y</text><text x="54" y="420" fill="#3535ff">Z</text><text x="60" y="445" fill="#f03030">X</text></g>
              </svg>
              <span class="name">透视视图</span><p class="hud">Number of emitters: 0</p><p class="hud two">Total live particles: 0</p>
              <span class="fps">帧速 : 166.7</span><span class="gap">网格间距 : 100 cm</span>
            </div>
          </section>
          <section class="view">
            <header><a href="#">查看</a><a href="#">摄像机</a><a href="#">显示</a><a href="#">选项</a><a href="#">过滤</a><a href="#">面板</a><a href="#">ProRender</a><span class="nav"><svg><use href="#nav1"/></svg><svg><use href="#nav2"/></svg><svg><use href="#nav3"/></svg><svg><use href="#nav4"/></svg></span></header>
            <div class="canvas">
              <svg viewBox="0 0 797 470" preserveAspectRatio="none">
                <g class="grid px" data-mid="235"></g>
                <path class="px" d="M398 0v470M49 235h349" stroke="#262626"/>
                <circle cx="398" cy="235" r="62" fill="none" stroke="#1f1f1f"/>
                <g id="topdisc"></g>
                <path d="M139 1h518M139 468h518" stroke="#d98a2e" stroke-width="1.500"/>
                <path d="M394 8l4-6 4 6" fill="none" stroke="#26269a"/>
                <path class="px" d="M398 235V130" stroke="#3535f0"/><path d="M398 112l4 18h-8z" fill="#2b2be6"/>
                <path d="M398 235h106" stroke="#c82828" stroke-width="2"/><path d="M747 235h47M789 231l5 4-5 4" fill="none" stroke="#b02020"/>
                <path d="M514 235h233" stroke="#e08a28" stroke-width="2"/><path d="M503 231l18 4-18 4z" fill="#e62e2e"/><circle cx="747" cy="235" r="2.500" fill="#f5a020"/>
                <path class="px" d="M443 160h31v30M458 160l16 16" fill="none" stroke="#3ac83a"/><path d="M458 160h16v16z" fill="#3ac03a" opacity=".4"/>
                <circle cx="398" cy="235" r="3.500" fill="#e6c02c" stroke="#2ee62e" stroke-width="2"/>
                <path class="px" d="M38 431v-17" stroke="#3535ff"/><path class="px" d="M38 431h19" stroke="#e03030"/>
                <g class="gz"><text x="38" y="408" fill="#3535ff">Z</text><text x="65" y="435" fill="#f03030">X</text><text x="38" y="435" fill="#35e035">Y</text></g>
              </svg>
              <span class="name">顶视图</span><p class="hud">Number of emitters: 0</p><p class="hud two">Total live particles: 0</p>
              <span class="fps">帧速 : 166.7</span><span class="gap">网格间距 : 100 cm</span>
            </div>
          </section>
          <section class="view">
            <header><a href="#">查看</a><a href="#">摄像机</a><a href="#">显示</a><a href="#">选项</a><a href="#">过滤</a><a href="#">面板</a><a href="#">ProRender</a><span class="nav"><svg><use href="#nav1"/></svg><svg><use href="#nav2"/></svg><svg><use href="#nav3"/></svg><svg><use href="#nav4"/></svg></span></header>
            <div class="canvas">
              <svg viewBox="0 0 797 470" preserveAspectRatio="none">
                <g class="grid px" data-mid="235"></g>
                <path class="px" d="M49 231h698M336 229h124v8H336z" fill="none" stroke="#262626"/>
                <path class="px" d="M398 231V1" fill="none" stroke="#26a026"/><path d="M394 8l4-6 4 6" fill="none" stroke="#26a026"/><path d="M398 231V124" stroke="#2fd32f" stroke-width="1.500"/><path d="M398 107l4 18h-8z" fill="#2ee62e"/>
                <path class="px" d="M398 235h397" stroke="#1c1c80"/><path d="M789 231l5 4-5 4" fill="none" stroke="#26269a"/><path d="M398 231h106" stroke="#4848c8" stroke-width="2"/><path d="M503 227l18 4-18 4z" fill="#2b2be6"/>
                <path class="px" d="M442 156h31v30M458 156l15 15" fill="none" stroke="#e03a3a"/><path d="M458 156h15v15z" fill="#d23a3a" opacity=".4"/>
                <circle cx="398" cy="231" r="3" fill="#f5a020" stroke="#e62e2e" stroke-width="2"/>
                <path class="px" d="M38 431v-17" stroke="#35e035"/><path class="px" d="M38 431h19" stroke="#3535ff"/>
                <g class="gz"><text x="38" y="408" fill="#35e035">Y</text><text x="65" y="435" fill="#3535ff">Z</text><text x="38" y="435" fill="#f03030">X</text></g>
              </svg>
              <span class="name">右视图</span><p class="hud">Number of emitters: 0</p><p class="hud two">Total live particles: 0</p>
              <span class="fps">帧速 : 166.7</span><span class="gap">网格间距 : 100 cm</span>
            </div>
          </section>
          <section class="view">
            <header><a href="#">查看</a><a href="#">摄像机</a><a href="#">显示</a><a href="#">选项</a><a href="#">过滤</a><a href="#">面板</a><a href="#">ProRender</a><span class="nav"><svg><use href="#nav1"/></svg><svg><use href="#nav2"/></svg><svg><use href="#nav3"/></svg><svg><use href="#nav4"/></svg></span></header>
            <div class="canvas">
              <svg viewBox="0 0 797 470" preserveAspectRatio="none">
                <g class="grid px" data-mid="235"></g>
                <path class="px" d="M50 231h348M336 229h124v8H336z" fill="none" stroke="#262626"/>
                <path class="px" d="M398 231V1" fill="none" stroke="#26a026"/><path d="M394 8l4-6 4 6" fill="none" stroke="#26a026"/><path d="M398 231V124" stroke="#2fd32f" stroke-width="1.500"/><path d="M398 107l5 18h-10z" fill="#2ee62e"/>
                <path class="px" d="M398 235h396" stroke="#a02020"/><path d="M789 231l5 4-5 4" fill="none" stroke="#a02020"/><path d="M398 231h106" stroke="#b83838" stroke-width="2"/><path d="M514 231h233" stroke="#e09a38" stroke-width="2"/><path d="M503 227l18 4-18 4z" fill="#e62e2e"/><circle cx="747" cy="231" r="2.500" fill="#f5a020"/>
                <path class="px" d="M443 156h31v30M458 156l16 15" fill="none" stroke="#3a3ae8"/><path d="M458 156h16v15z" fill="#3a3ad8" opacity=".4"/>
                <circle cx="398" cy="231" r="4" fill="#2b2be6"/>
                <path class="px" d="M38 431v-17" stroke="#35e035"/><path class="px" d="M38 431h19" stroke="#e03030"/>
                <g class="gz"><text x="38" y="408" fill="#35e035">Y</text><text x="65" y="435" fill="#f03030">X</text><text x="38" y="435" fill="#3535ff">Z</text></g>
              </svg>
              <span class="name">正视图</span><p class="hud">Number of emitters: 0</p><p class="hud two">Total live particles: 0</p>
              <span class="fps">帧速 : 166.7</span><span class="gap">网格间距 : 100 cm</span>
            </div>
          </section>
        </div>

        <aside class="tools snaps">
          <i class="grip h"></i>
          <div class="g col"><button class="c"><svg><use href="#r1"/></svg></button><button class="c"><svg><use href="#r2"/></svg></button><button class="c"><svg><use href="#r3"/></svg></button><button class="c"><svg><use href="#r4"/></svg></button><button class="c"><svg><use href="#r5"/></svg></button><button class="c"><svg><use href="#r6"/></svg></button><button class="c"><svg><use href="#r7"/></svg></button><button class="c"><svg><use href="#r8"/></svg></button><button class="c"><svg><use href="#r9"/></svg></button><button class="c"><svg><use href="#r10"/><g class="tiny"><text x="8" y="12">P</text><text x="8" y="23">S</text><text x="8" y="33">R</text></g></svg></button></div>
        </aside>
      </div>

      <div class="timeline"><i class="grip v"></i><div class="ruler" id="ruler"></div><input class="num" value="0 F" aria-label="当前帧"></div>

      <div class="transport">
        <i class="grip v"></i>
        <input class="num" value="0 F" aria-label="起始帧">
        <div class="range"><span>◀</span><span>0 F</span><span class="end">90 F</span><span>▶</span></div>
        <input class="num" value="90 F" aria-label="结束帧">
        <div class="g"><button class="c"><svg viewBox="0 0 36 36"><use href="#t1"/></svg></button></div>
        <div class="g"><button class="c"><svg viewBox="0 0 36 36"><use href="#t2"/></svg></button><button class="c"><svg viewBox="0 0 36 36"><use href="#t3"/></svg></button><button class="c"><svg viewBox="0 0 36 36"><use href="#t4"/></svg></button><button class="c"><svg viewBox="0 0 36 36" class="flip"><use href="#t3"/></svg></button><button class="c"><svg viewBox="0 0 36 36" class="flip"><use href="#t2"/></svg></button></div>
        <div class="g"><button class="c"><svg viewBox="0 0 36 36" class="flip"><use href="#t1"/></svg></button></div>
        <div class="g"><button class="c"><svg viewBox="0 0 36 36"><use href="#reck"/></svg></button><button class="c"><svg viewBox="0 0 36 36"><use href="#recp"/></svg></button><button class="c"><svg viewBox="0 0 36 36"><use href="#rec"/><text x="18" y="25" class="xyz">?</text></svg></button></div>
        <div class="g orange"><button class="c on"><svg viewBox="0 0 36 36"><use href="#cross"/></svg></button><button class="c on"><svg viewBox="0 0 36 36"><use href="#scale"/></svg></button><button class="c on"><svg viewBox="0 0 36 36"><use href="#rot"/></svg></button><button class="c on"><svg viewBox="0 0 36 36"><use href="#ring"/><text x="18" y="25" class="xyz">P</text></svg></button><button class="c"><svg viewBox="0 0 36 36"><use href="#kdots"/></svg></button></div>
        <div class="g"><button class="c on m"><svg viewBox="0 0 36 36"><use href="#film"/></svg></button></div>
      </div>

      <div class="docks">
        <section class="mats"><header><i class="grip sq"></i><a href="#">创建</a><a href="#">编辑</a><a href="#">功能</a><a href="#">纹理</a><a href="#">Cycles 4D</a></header></section>
        <section class="coords">
          <header><i class="grip sq"></i><span>位置</span><span>尺寸</span><span>旋转</span></header>
          <div class="xyzgrid">
            <label>X<input class="num" value="0 cm"></label><label>X<input class="num" value="900 cm"></label><label>H<input class="num" value="0 °"></label>
            <label>Y<input class="num" value="5 cm"></label><label>Y<input class="num" value="0 cm"></label><label>P<input class="num" value="0 °"></label>
            <label>Z<input class="num" value="0 cm"></label><label>Z<input class="num" value="900 cm"></label><label>B<input class="num" value="0 °"></label>
            <select aria-label="坐标系"><option>对象 (相对)</option></select><select aria-label="尺寸模式"><option>绝对尺寸</option></select><button class="apply">应用</button>
          </div>
        </section>
      </div>
    </div>
  </div>
  <footer class="status"><i class="grip sq"></i></footer>
</div>

<div class="right">
  <div class="dock objects">
    <section class="panel">
      <header><i class="grip sq"></i><a href="#">文件</a><a href="#">编辑</a><a href="#">查看</a><a href="#">对象</a><a href="#">标签</a><a href="#">书签</a><span class="nav"><svg><use href="#mag"/></svg><svg viewBox="0 0 16 16"><path d="M8 1l6 7h-3v6H5V8H2z" fill="none" stroke="#1b1b1b" stroke-width="2"/></svg><svg viewBox="0 0 16 16"><ellipse cx="8" cy="9" rx="6" ry="3" fill="none" stroke="#1b1b1b"/></svg><svg><use href="#plus"/></svg></span></header>
      <div class="tree">
        <div class="names"><div><svg class="br" viewBox="0 0 16 20"><path d="M8.500 0v20M8 10.500h8" stroke="#aaa" fill="none"/></svg><svg class="oi" viewBox="0 0 16 16"><rect x="4" y="1" width="8" height="14" rx="3" fill="#7cc0f2" stroke="#4f92c4"/></svg>圆柱</div><div class="cur"><svg class="br" viewBox="0 0 16 20"><path d="M8.500 0v10.500H16" stroke="#aaa" fill="none"/></svg><svg class="oi" viewBox="0 0 18 12"><use href="#disc"/></svg>碰撞圆盘</div></div>
        <div class="flags"><div><svg viewBox="0 0 38 20"><rect x="2" y="4" width="12" height="12" rx="2" fill="#777"/><path d="M4 14l8-8" stroke="#333"/><circle cx="22" cy="7" r="2.500" fill="#777"/><circle cx="22" cy="15" r="2.500" fill="#777"/><path d="M28 11l2 3 5-8" fill="none" stroke="#3dde8b" stroke-width="1.500"/></svg></div><div><svg viewBox="0 0 38 20"><rect x="2" y="4" width="12" height="12" rx="2" fill="#777"/><path d="M4 14l8-8" stroke="#333"/><circle cx="22" cy="7" r="2.500" fill="#777"/><circle cx="22" cy="15" r="2.500" fill="#777"/><path d="M28 11l2 3 5-8" fill="none" stroke="#3dde8b" stroke-width="1.500"/></svg></div></div>
        <div class="tags"><div><svg><use href="#tag"/></svg></div><div><svg><use href="#tag"/></svg></div></div>
      </div>
      <div class="ime"><svg viewBox="0 0 50 50"><circle cx="25" cy="25" r="23.500" fill="#fff" stroke="#2484f0" stroke-width="2.500"/><circle cx="25" cy="25" r="20.500" fill="none" stroke="#111"/><path d="M21 21h8q1 8-4 12-5-4-4-12z" fill="#111"/><path d="M22 22c-5-1-8-3-8-9M17 19l-4-3M19 20v-6M28 22c5-1 8-3 8-9M33 19l4-3M31 20v-6" fill="none" stroke="#111" stroke-width="1.500"/><text x="25" y="40">行灵君</text></svg><span>英</span></div>
    </section>
    <nav class="tabs"><button class="cur">对象</button><button>场次</button><button>内容浏览器</button><button>构造</button></nav>
  </div>
  <div class="dock attrs">
    <section class="panel">
      <header><i class="grip sq"></i><a href="#">模式</a><a href="#">编辑</a><a href="#">用户数据</a><span class="nav"><svg class="wide" viewBox="0 0 36 16"><path d="M1 8l16-7v14zM35 8 19 1v14z" fill="none" stroke="#333"/></svg><svg class="up" viewBox="0 0 16 16"><path d="M8 0l6 16-6-3-6 3z" fill="#1b1b1b"/></svg><svg class="up"><use href="#mag"/></svg><svg viewBox="0 0 16 16"><path d="M3 7h10v8H3zM5 7V3q3-3 5 0M8 10v2" fill="none" stroke="#1b1b1b" stroke-width="1.500"/></svg><svg viewBox="0 0 16 16"><circle cx="8" cy="8" r="6" fill="none" stroke="#1b1b1b" stroke-width="1.500"/><circle cx="8" cy="8" r="2.500" fill="none" stroke="#1b1b1b" stroke-width="1.500"/></svg><svg><use href="#plus"/></svg></span></header>
      <div class="body">
        <h2><svg><use href="#disc"/></svg>圆盘对象 [碰撞圆盘]</h2>
        <div class="seg"><button>基本</button><button class="on">坐标</button><button class="on">对象</button><button>切片</button><button>平滑着色(Phong)</button></div>
        <h3>坐标</h3>
        <div class="psrgrid">
          <label><svg><use href="#key"/></svg><span>P . X</span><input class="num" value="0 cm"></label><label><svg><use href="#key"/></svg><span>S . X</span><input class="num" value="1"></label><label><svg><use href="#key"/></svg><span>R . H</span><input class="num" value="0 °"></label>
          <label><svg><use href="#key"/></svg><span>P . Y</span><input class="num" value="5 cm"></label><label><svg><use href="#key"/></svg><span>S . Y</span><input class="num" value="1"></label><label><svg><use href="#key"/></svg><span>R . P</span><input class="num" value="0 °"></label>
          <label><svg><use href="#key"/></svg><span>P . Z</span><input class="num" value="0 cm"></label><label><svg><use href="#key"/></svg><span>S . Z</span><input class="num" value="1"></label><label><svg><use href="#key"/></svg><span>R . B</span><input class="num" value="0 °"></label>
          <label class="order"><span>顺序</span><select><option>HPB</option></select></label>
        </div>
        <button class="fold">四元</button>
        <button class="fold">冻结变换</button>
        <h3>对象属性</h3>
        <div class="props">
          <label><svg><use href="#key"/></svg><span>内部半径</span><input class="num" value="0 cm"></label>
          <label><svg><use href="#key"/></svg><span>外部半径</span><input class="num" value="450 cm"></label>
          <label><svg><use href="#key"/></svg><span>圆盘分段</span><input class="num" value="4"></label>
          <label><svg><use href="#key"/></svg><span>旋转分段</span><input class="num" value="36"></label>
          <label><svg><use href="#key"/></svg><span>方向 . . . .</span><select><option>+Y</option></select></label>
        </div>
      </div>
    </section>
    <nav class="tabs"><button class="cur">属性</button><button>层</button></nav>
  </div>
</div>
</div>
<script src="script.js"></script>
</body>
</html>
```
FILE: styles.css
```css
* { box-sizing: border-box; }
body { margin: 0; min-height: 100vh; display: flex; flex-direction: column; background: #444; color: #bdbdbd; font: 11px/16px "Open Sans", "Noto Sans CJK SC", sans-serif; }
button, input, select { font: inherit; color: inherit; margin: 0; padding: 0; border: 0; border-radius: 0; background: none; }
a { color: inherit; text-decoration: none; white-space: nowrap; }
h1, h2, h3, p { margin: 0; font-size: inherit; font-weight: 400; }
svg { display: block; flex: none; overflow: visible; }
.defs { position: absolute; width: 0; height: 0; }

.title { display: flex; align-items: center; height: 23px; background: #fff; color: #000; padding: 0 2px 0 3px; }
.title h1 { flex: 1; font-size: 12px; margin-left: 6px; }
.title .app { width: 15px; height: 15px; }
.title button { width: 46px; height: 23px; display: grid; place-items: center; }
.title button svg { width: 11px; height: 11px; }

.menubar { display: flex; align-items: center; gap: 14px; height: 28px; padding: 0 0 5px 8px; }
.menubar .hot { color: #ffffa0; }
.layout { margin-left: auto; display: flex; align-items: center; gap: 5px; }
.layout select { width: 127px; }
.i16 { width: 16px; height: 16px; margin: 0 0 0 -8px; }

select { appearance: none; height: 19px; padding: 0 18px 0 7px; border: 1px solid #333; border-radius: 4px; color: #ccc; background: url("data:image/svg+xml,%3Csvg xmlns='http://www.w3.org/2000/svg' width='8' height='5'%3E%3Cpath d='M0 0h8L4 5z' fill='%23ddd'/%3E%3C/svg%3E") no-repeat right 5px center, linear-gradient(#6c6c6c, #5c5c5c); }
.num { width: 66px; height: 21px; padding: 0 10px 0 4px; border: 1px solid; border-color: #282828 #555 #5c5c5c #282828; border-radius: 3px; color: #b5b5b5; background: #333 url("data:image/svg+xml,%3Csvg xmlns='http://www.w3.org/2000/svg' width='5' height='9'%3E%3Cpath d='M0 4h5L2.500 0zM0 5h5L2.500 9z' fill='%23999'/%3E%3C/svg%3E") no-repeat right 2px center; }

.grip { flex: none; background: repeating-linear-gradient(-60deg, #999 0 1px, #333 1px 2px, #444 2px 3px); }
.grip.v { width: 6px; height: 17px; }
.grip.h { width: 28px; height: 5px; margin: 0 0 1px 4px; }
.grip.sq { width: 12px; height: 12px; }

.g { display: flex; flex: none; margin-left: 10px; border-radius: 4px; overflow: hidden; background: #6a6a6a; outline: 1px solid #262626; outline-offset: -1px; }
.g.near { margin-left: 2px; }
.g.col { flex-direction: column; margin: 2px 0 0; }
.g.col.far { margin-top: 10px; }
.c { width: 36px; height: 36px; box-shadow: inset -1px -1px 0 #5a5a5a; }
.c svg { width: 36px; height: 36px; color: #f8b51e; }
.c .k { color: #1b1b1b; }
.c .blue { color: #8ea6e8; }
.c .ghost { color: #777; opacity: .3; }
.c .red { color: #e86a40; }
.c .green { color: #4ade8b; }
.c.on { background: #8ba4cf; }
.c.m { background-image: linear-gradient(135deg, transparent 50%, #1b1b1b 50%); background-size: 6px 6px; background-repeat: no-repeat; background-position: right 2px bottom 2px; }
.dim svg { color: #484848; filter: drop-shadow(1px 1px 0 #999); }
.flip { transform: scaleX(-1); }
text { font-family: "Open Sans", sans-serif; text-anchor: middle; }
.xyz { font-size: 20px; font-weight: 800; fill: #1b1b1b; }
.psr { font-size: 14px; font-weight: 800; fill: #f8b51e; stroke: #333; stroke-width: 1px; paint-order: stroke; }
.zero { font-size: 16px; font-weight: 800; fill: #eee; stroke: #333; stroke-width: 1px; paint-order: stroke; }
.qr { font-size: 16px; fill: #3d9af0; }
.tee { font: 700 30px "Liberation Serif", serif; fill: #4ade8b; stroke: #222; stroke-width: 1px; paint-order: stroke; }
.efx { font: italic 800 19px "Open Sans", sans-serif; fill: #eee; stroke: #222; stroke-width: 2px; paint-order: stroke; }
.tiny { font-size: 12px; font-weight: 800; fill: #f58f2a; stroke: #222; stroke-width: 1px; paint-order: stroke; }
.gz { font-size: 12px; }
.px { shape-rendering: crispEdges; }

.main { flex: 1; display: grid; grid-template-columns: minmax(0, 1fr) 807px; }
.left, .center { display: flex; flex-direction: column; min-width: 0; }
.left { border-right: 1px solid #2c2c2c; padding-right: 2px; }
.bar { display: flex; align-items: center; }
.first .grip { height: 28px; }
.first .grip + .g { margin-left: 2px; }
.work { flex: 1; display: flex; }
.tools { width: 36px; flex: none; display: flex; flex-direction: column; }
.a { padding-top: 3px; }
.brand { margin-top: auto; padding-top: 3px; width: 36px; writing-mode: vertical-rl; transform: rotate(180deg); color: #999; white-space: nowrap; }
.brand b, .brand span { display: block; line-height: 18px; }
.brand b { font-size: 16px; font-style: italic; font-weight: 800; }
.brand span { font-size: 15px; }
.center { flex: 1; padding-left: 4px; }
.fields { margin-top: 3px; }
.fields .grip, .mograph .grip { margin-right: 1px; }
.mograph .grip { height: 28px; }
.fields .grip + .g, .mograph .grip + .g { margin-left: 1px; }
.f { display: flex; align-items: center; gap: 7px; height: 23px; padding: 0 8px 0 3px; color: #c4c4c4; box-shadow: inset -1px 0 0 #555; white-space: nowrap; }
.f svg { width: 14px; height: 14px; }
.mograph { margin-top: 3px; }

.stage { flex: 1; display: flex; gap: 3px; padding-top: 3px; }
.stage .tools .g + .g { margin-top: 2px; }
.stage .tools .grip { margin: 2px 0 1px 4px; }
.views { flex: 1; min-width: 0; display: grid; grid-template: 1fr 1fr / 1fr 1fr; gap: 1px; }
.view { display: flex; flex-direction: column; border: 1px solid; border-color: #6a6a6a #2c2c2c #2c2c2c #6a6a6a; min-width: 0; }
.view header, .mats header, .panel header { display: flex; align-items: center; gap: 14px; height: 24px; padding: 0 2px 0 7px; }
.view header { height: 23px; padding: 1px 0 0 7px; }
.active header { padding-left: 5px; }
.grip.sq + a { margin-left: -6px; }
.nav { margin-left: auto; display: flex; gap: 1px; }
.nav svg { width: 16px; height: 16px; }
.canvas { flex: 1; position: relative; min-height: 300px; background: #555; overflow: hidden; border-top: 1px solid #3c3c3c; }
.canvas > svg { position: absolute; inset: 0; width: 100%; height: 100%; }
.persp { background: #838383; outline: 1px solid #bdbdbd; }
.persp::after { content: ""; position: absolute; inset: 0; border: 1px solid #b9783c; }
.name, .hud, .fps, .gap { position: absolute; white-space: nowrap; color: #e4e4e4; }
.name { left: 4px; top: 3px; background: #4a4a4a; }
.hud { left: 8px; top: 4px; padding: 3px 4px 5px; height: 24px; background: #595959; color: #ffc000; }
.hud.two { top: 28px; }
.fps, .gap { bottom: 3px; height: 18px; padding: 1px 2px; border-radius: 2px; background: rgba(60, 60, 60, .6); }
.fps { left: 50%; transform: translateX(-50%); }
.gap { right: 3px; }
.persp .gap { padding-right: 14px; }
.persp .fps { margin-left: -3px; }
.snaps { margin-left: 1px; }

.timeline { display: flex; align-items: center; gap: 3px; margin-top: 4px; padding-right: 1px; }
.ruler { flex: 1; height: 22px; margin-right: 3px; padding: 0 6px 0 5px; display: flex; justify-content: space-between; background: #333; border: 1px solid #292929; line-height: 14px; }
.ruler span { width: 0; display: flex; justify-content: center; position: relative; }
.ruler span::after { content: ""; position: absolute; bottom: 0; height: 1px; width: 1px; background: #bbb; }
.ruler span.even::after { height: 3px; }
.ruler span.now { justify-content: flex-start; text-indent: 6px; color: #55dd8c; }
.ruler span.now::before { content: ""; position: absolute; left: -5px; top: 0; width: 9px; height: 17px; background: #55dd8c; }
.transport { display: flex; align-items: center; gap: 3px; margin-top: 5px; padding-right: 1px; }
.transport .grip { height: 20px; }
.transport .g { margin-left: 7px; }
.transport .c, .transport .c svg { width: 28px; height: 27px; }
.transport .orange .c svg { color: #f58f2a; }
.range { flex: 1; display: flex; gap: 4px; align-items: center; height: 20px; margin: 0 3px 0 4px; padding: 0 4px; border-radius: 3px; border: 1px solid #2c2c2c; background: linear-gradient(#7d7d7d, #5c5c5c); color: #2f2f2f; }
.range span:first-child, .range span:last-child { color: #ddd; font-size: 10px; }
.range .end { margin-left: auto; }

.docks { display: grid; grid-template-columns: minmax(0, 1fr) 411px; gap: 3px; height: 171px; margin-top: 4px; }
.docks section { border: 1px solid; border-color: #6a6a6a #2c2c2c #2c2c2c #6a6a6a; }
.mats header { border-bottom: 1px solid #6a6a6a; box-shadow: inset 0 -1px 0 #333; height: 25px; padding-left: 5px; }
.coords header { display: grid; grid-template-columns: 12px 122px 122px 1fr; column-gap: 8px; align-items: center; height: 22px; padding: 1px 0 0 4px; border-bottom: 1px solid #6a6a6a; }
.xyzgrid { display: grid; grid-template-columns: 131px 131px 1fr; gap: 2px 3px; padding: 4px 4px 0 3px; }
.xyzgrid label { display: grid; grid-template-columns: 11px 1fr; align-items: center; height: 21px; }
.xyzgrid label:nth-child(3n) { grid-template-columns: 13px 1fr; }
.xyzgrid .num { width: 100%; }
.xyzgrid select { margin: 3px 0 0 11px; }
.apply { margin: 3px 0 0 13px; border: 1px solid #333; border-radius: 8px; background: linear-gradient(#6c6c6c, #606060); color: #ccc; height: 19px; }
.status { height: 20px; margin: 4px 0 0; border: 1px solid; border-color: #6a6a6a #2c2c2c #2c2c2c #6a6a6a; padding: 3px 4px; }

.right { display: grid; grid-template-rows: 654px 1fr; gap: 3px; }
.dock { display: grid; grid-template-columns: minmax(0, 1fr) 24px; }
.panel { position: relative; display: flex; flex-direction: column; border: 1px solid; border-color: #6a6a6a #2c2c2c #2c2c2c #6a6a6a; }
.panel header { height: 25px; padding-left: 5px; border-bottom: 1px solid #6a6a6a; box-shadow: inset 0 -1px 0 #333; }
.panel .nav { gap: 3px; }
.nav .wide { width: 36px; margin-right: 6px; }
.nav .up { margin-right: 4px; }
.tree { flex: 1; display: grid; grid-template-columns: 85px 40px 1fr; padding: 1px 2px 0 1px; }
.tree > div { border-right: 1px solid #333; }
.tree > div > div { height: 20px; display: flex; align-items: center; background: #4e4e4e; white-space: nowrap; }
.tree .cur { color: #f5b52a; }
.tree .tags > div + div { background: none; }
.br { width: 16px; height: 20px; }
.oi { width: 14px; height: 14px; margin: 0 4px 0 1px; }
.flags svg { width: 38px; height: 20px; }
.tags svg { width: 16px; height: 20px; margin-left: 2px; }
.ime { position: absolute; left: 529px; top: 68px; display: flex; align-items: flex-end; }
.ime svg { width: 50px; height: 50px; z-index: 1; }
.ime text { font-size: 6px; font-weight: 700; fill: #111; }
.ime span { width: 53px; height: 28px; margin-left: -22px; border: 1px solid #2484f0; border-radius: 14px; background: #fff; color: #2484f0; font-size: 13px; line-height: 26px; font-weight: 700; text-align: center; padding-left: 16px; }
.tabs { display: flex; flex-direction: column; gap: 1px; padding: 1px 2px 0 1px; }
.tabs button { writing-mode: vertical-rl; text-orientation: sideways; width: 21px; padding: 6px 2px; border-radius: 0 4px 4px 0; background: #383838; color: #777; line-height: 16px; }
.tabs .cur { background: linear-gradient(90deg, #5c5c5c, #747474); color: #f5a020; }

.body { padding: 4px 3px 0 2px; }
.body h2 { display: flex; align-items: center; gap: 5px; height: 20px; padding-left: 2px; }
.body h2 svg { width: 18px; height: 12px; }
.seg { display: flex; width: 475px; height: 20px; margin: 2px 0 6px 0; border: 1px solid #262626; border-radius: 3px; overflow: hidden; background: #6a6a6a; }
.seg button { flex: 1 1 0; min-width: 0; color: #ccc; border-right: 1px solid #262626; white-space: nowrap; }
.seg button:last-child { border: 0; }
.seg .on { background: #8ba4cf; color: #000; }
.body h3 { height: 18px; padding: 0 2px; line-height: 18px; background: #333; color: #ccc; }
.psrgrid { display: grid; grid-template-columns: 119px 119px 119px; gap: 2px; height: 96px; align-content: start; padding: 4px 0 0 1px; }
.psrgrid label, .props label { display: flex; align-items: center; height: 21px; }
.psrgrid label span { width: 28px; white-space: nowrap; }
.psrgrid svg, .props svg { width: 16px; height: 16px; margin-right: 7px; }
.psrgrid .order { grid-column: 3; padding-left: 23px; height: 19px; }
.order select { width: 66px; }
.fold { display: block; width: 100%; height: 18px; margin-bottom: 3px; padding-left: 12px; text-align: left; background: #616161; color: #ccc; line-height: 18px; }
.fold::before { content: ""; display: inline-block; border: 4px solid transparent; border-left-color: #ddd; border-right: 0; margin-right: 4px; }
.fold + h3 { margin-top: 4px; }
.props { display: grid; gap: 2px; padding: 4px 0 0 1px; }
.props span { width: 49px; white-space: nowrap; }
.props select { width: 71px; }
```
FILE: script.js
```js
const NS = 'http://www.w3.org/2000/svg';
const rad = Math.PI / 180;

function path(parent, d, attrs) {
  const p = document.createElementNS(NS, 'path');
  p.setAttribute('d', d);
  for (const k in attrs) p.setAttribute(k, attrs[k]);
  parent.appendChild(p);
}

// Perspective projection of a point on the disc plane (degrees, radius in cm)
function project(deg, r) {
  const s = r * Math.sin(deg * rad), t = r * Math.cos(deg * rad);
  const w = 1 - 0.001608 * t;
  return [393 + 1.572 * s / w, 206 + 0.914 * t / w];
}
function ring(r, step) {
  const pts = [];
  for (let a = 6; a < 366; a += step) pts.push(project(a, r).map(v => v.toFixed(1)).join(' '));
  return 'M' + pts.join('L') + 'Z';
}

const mesh = document.getElementById('mesh3d');
path(mesh, ring(450, 10), { fill: '#444a50', stroke: '#d08a48', 'stroke-width': 2 });
let spokes = '';
for (let a = 6; a < 366; a += 10) spokes += 'M393 206L' + project(a, 450).map(v => v.toFixed(1)).join(' ');
for (let a = 9; a < 369; a += 10) spokes += 'M393 206L' + project(a, 80).map(v => v.toFixed(1)).join(' ');
path(mesh, spokes + ring(112.5, 10) + ring(225, 10) + ring(337.5, 10) + ring(80, 5), { fill: 'none', stroke: '#1c1e20' });
const end = project(56, 450);
path(mesh, 'M502 249L' + end.join(' '), { stroke: '#f0a030', 'stroke-width': 1.5 });

for (const g of document.querySelectorAll('.grid')) {
  const mid = Number(g.dataset.mid);
  let d = '';
  for (let i = -5; i <= 5; i++) d += 'M' + Math.round(398 + i * 77.4) + ' 0V470';
  for (let i = -3; i <= 3; i++) d += 'M0 ' + Math.round(mid + i * 77.5) + 'H797';
  path(g, d, { stroke: '#454545' });
}

const pts = [];
for (let a = 0; a < 360; a += 10) pts.push((398 + 350 * Math.cos(a * rad)).toFixed(1) + ' ' + (235 + 350 * Math.sin(a * rad)).toFixed(1));
path(document.getElementById('topdisc'), 'M' + pts.join('L') + 'Z', { fill: 'none', stroke: '#d98a2e', 'stroke-width': 1.5 });

const ruler = document.getElementById('ruler');
for (let f = 0; f <= 90; f++) {
  const s = document.createElement('span');
  if (f % 2 === 0) { s.textContent = f; s.className = f ? 'even' : 'even now'; }
  ruler.appendChild(s);
}
```
